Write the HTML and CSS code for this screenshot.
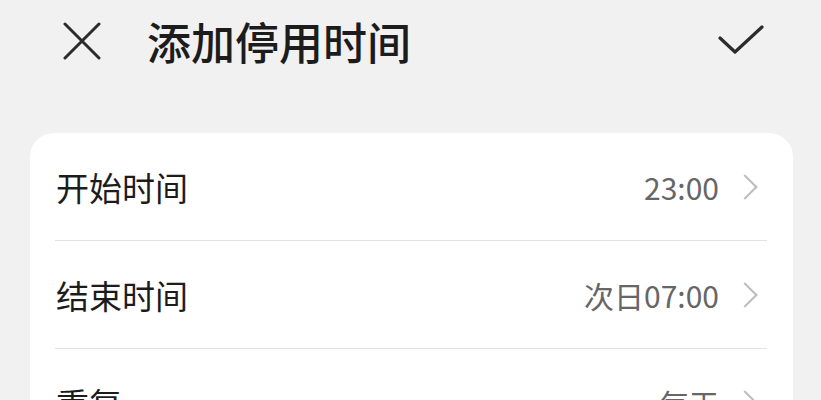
FILE: index.html
```html
<!DOCTYPE html>
<html lang="zh-CN">
<head>
  <meta charset="UTF-8" />
  <title>添加停用时间</title>
  <link rel="stylesheet" href="styles.css">
</head>
<body>

  <header class="topbar">
    <button class="icon-btn close" aria-label="关闭">
      <svg width="38" height="38" viewBox="0 0 38 38">
        <path d="M2 2 L36 36 M36 2 L2 36" stroke="#2b2b2b" stroke-width="3" stroke-linecap="round" fill="none"/>
      </svg>
    </button>
    <h1>添加停用时间</h1>
    <button class="icon-btn confirm" aria-label="确定">
      <svg width="48" height="32" viewBox="0 0 48 32">
        <path d="M3 14 L18 28 L45 3" stroke="#2b2b2b" stroke-width="3.2" stroke-linecap="round" stroke-linejoin="round" fill="none"/>
      </svg>
    </button>
  </header>

  <main>
    <ul class="card">
      <li class="row">
        <span class="label">开始时间</span>
        <span class="value">23:00</span>
        <span class="arrow"></span>
      </li>
      <li class="row">
        <span class="label">结束时间</span>
        <span class="value">次日07:00</span>
        <span class="arrow"></span>
      </li>
      <li class="row">
        <span class="label">重复</span>
        <span class="value">每天</span>
        <span class="arrow"></span>
      </li>
    </ul>
  </main>

</body>
</html>
```

FILE: styles.css
```css
* {
  margin: 0;
  padding: 0;
  box-sizing: border-box;
}

body {
  font-family: "Noto Sans CJK SC", "Noto Sans", sans-serif;
  background: #f1f1f1;
  color: #1c1c1c;
  overflow: hidden;
}

.topbar {
  height: 82px;
  display: flex;
  align-items: center;
  padding: 0 56px 0 63px;
}

.icon-btn {
  background: none;
  border: none;
  display: flex;
  align-items: center;
  justify-content: center;
}

.topbar h1 {
  font-size: 44px;
  font-weight: 500;
  margin-left: 46px;
  flex: 1;
  line-height: 1;
}

.confirm {
  margin-top: -2px;
}

.card {
  list-style: none;
  background: #fff;
  margin: 51px 28px 0 30px;
  border-radius: 24px;
  padding: 0 26px 0 25px;
}

.row {
  height: 108px;
  display: flex;
  align-items: center;
  border-bottom: 1px solid #e3e3e3;
}

.label {
  flex: 1;
  font-size: 33px;
  padding-left: 1px;
}

.value {
  font-size: 30px;
  color: #666;
  margin-right: 17px;
}

/* chevron drawn from two borders */
.arrow {
  width: 18px;
  height: 18px;
  border-top: 2px solid #bdbdbd;
  border-right: 2px solid #bdbdbd;
  transform: rotate(45deg);
  margin-right: 13px;
}
```
